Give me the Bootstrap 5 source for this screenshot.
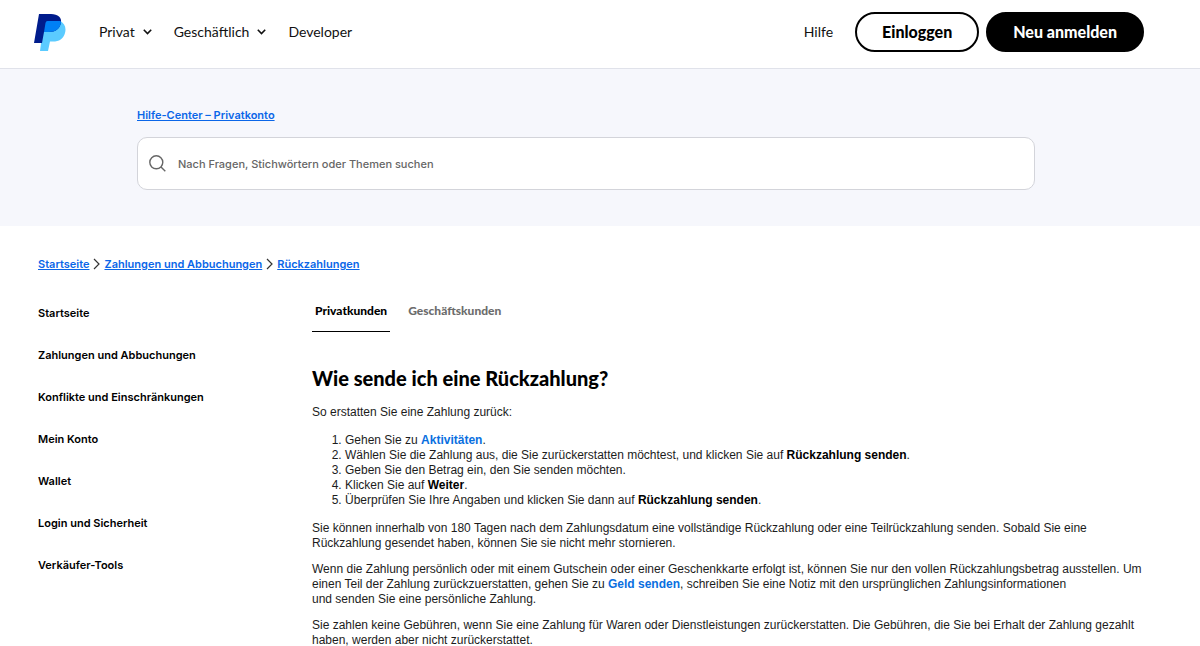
<!DOCTYPE html>
<html lang="de">
<head>
<meta charset="utf-8">
<meta name="viewport" content="width=device-width, initial-scale=1">
<title>Wie sende ich eine Rückzahlung?</title>
<link href="https://cdn.jsdelivr.net/npm/bootstrap@5.3.0/dist/css/bootstrap.min.css" rel="stylesheet">
<style>
  body { font: 12px/15px "Liberation Sans", Arial, sans-serif; color: #1c1c1c; background: #fff; }
  .site-header { height: 69px; padding: 0 56px 4px 34px; border-bottom: 1px solid #e0e2ea; font-family: Lato, sans-serif; }
  .main-menu { gap: 22px; margin-left: 33px; font-size: 14px; line-height: 20px; }
  .main-menu a, .main-menu button, .help-link { color: #111; text-decoration: none; }
  .help-link { font-size: 14px; line-height: 20px; margin-right: 22px; }
  .pill-group { gap: 7px; }
  .pill { height: 40px; border: 2px solid #000; border-radius: 20px; font-size: 16px; line-height: 20px; font-weight: 900; padding: 0 25px; }
  .pill-light { background: #fff; color: #000; }
  .pill-dark { background: #000; color: #fff; }
  .hero { background: #f6f7fc; padding: 38px 165px 36px 137px; font-family: Inter, sans-serif; }
  .ui-link { color: #0a66e8; font-size: 11px; line-height: 16px; font-weight: 600; text-decoration: underline; }
  .search-box { height: 53px; margin-top: 14px; padding: 0 11px; gap: 12px; background: #fff; border: 1px solid #d3d4da; border-radius: 10px; }
  .search-box input { font-size: 11px; line-height: 16px; font-weight: 500; color: #333; }
  .search-box input::placeholder { color: #666; opacity: 1; }
  .page { padding: 30px 56px 0 38px; }
  .trail { gap: 4px; font-family: Inter, sans-serif; }
  .columns { margin-top: 31px; }
  .side-menu { width: 274px; gap: 26px; padding-top: 2px; font: 600 11px/16px Inter, sans-serif; }
  .side-menu a { color: #000; text-decoration: none; }
  .tabs { gap: 15px; font: 12px/16px Lato, sans-serif; }
  .tabs button { padding: 0 3px 12px; border-bottom: 1px solid transparent; color: #6c6c6c; font-weight: 900; }
  .tabs button.active { border-color: #000; color: #000; }
  .article h1 { font: 900 20px/28px Lato, sans-serif; color: #000; margin: 32px 0 13px; }
  .article p { margin: 0 0 11px; }
  .article ol { margin: 13px 0; padding-left: 33px; }
  .article a { color: #0a6fdf; font-weight: 700; text-decoration: none; }
  .article strong { color: #000; }
</style>
</head>
<body>
<header class="site-header d-flex align-items-center">
  <a href="#" aria-label="PayPal" class="d-flex">
    <svg width="32" height="38" viewBox="0 0 32 38" aria-hidden="true">
      <path fill="#5bcbff" d="M10 8H26C30.500 10 32.500 14.500 31 20C29.500 26 25 28.500 19 28.500H16L14 38H6Z"/>
      <path fill="#001c8c" d="M5 1H17C24 1 28 4.500 27 10C25.500 16 21.500 19 15 19H10L8 30H0Z"/>
      <path fill="#0080f5" d="M13.500 8H26.300Q27.200 8.600 27 10C25.500 16 21.500 19 15 19H10L11.500 10Q11.800 8 13.500 8Z"/>
    </svg>
  </a>
  <nav class="main-menu d-flex">
    <button class="border-0 bg-transparent p-0 d-flex align-items-center gap-2">Privat
      <svg width="9" height="6" viewBox="0 0 9 6" fill="none" stroke="#111" stroke-width="1.6"><path d="M.8.8 4.5 4.5 8.2.8"/></svg></button>
    <button class="border-0 bg-transparent p-0 d-flex align-items-center gap-2">Geschäftlich
      <svg width="9" height="6" viewBox="0 0 9 6" fill="none" stroke="#111" stroke-width="1.6"><path d="M.8.8 4.5 4.5 8.2.8"/></svg></button>
    <a href="#">Developer</a>
  </nav>
  <a href="#" class="help-link ms-auto">Hilfe</a>
  <div class="pill-group d-flex">
    <button class="pill pill-light">Einloggen</button>
    <button class="pill pill-dark">Neu anmelden</button>
  </div>
</header>

<section class="hero">
  <a href="#" class="ui-link d-inline-block">Hilfe-Center – Privatkonto</a>
  <label class="search-box d-flex align-items-center">
    <svg width="17" height="17" viewBox="0 0 17 17" fill="none" stroke="#666" stroke-width="1.4" aria-hidden="true"><circle cx="7.3" cy="7.3" r="6.5"/><path d="m12 12 4.3 4.3"/></svg>
    <input type="search" class="border-0 p-0 flex-grow-1 bg-transparent" placeholder="Nach Fragen, Stichwörtern oder Themen suchen" aria-label="Suche">
  </label>
</section>

<main class="page">
  <nav class="trail d-flex align-items-center" aria-label="Navigationspfad">
    <a href="#" class="ui-link">Startseite</a>
    <svg width="7" height="12" viewBox="0 0 7 12" fill="none" stroke="#333" stroke-width="1.2"><path d="m1 1 5 5-5 5"/></svg>
    <a href="#" class="ui-link">Zahlungen und Abbuchungen</a>
    <svg width="7" height="12" viewBox="0 0 7 12" fill="none" stroke="#333" stroke-width="1.2"><path d="m1 1 5 5-5 5"/></svg>
    <a href="#" class="ui-link">Rückzahlungen</a>
  </nav>
  <div class="columns d-flex">
    <nav class="side-menu d-flex flex-column flex-shrink-0">
      <a href="#">Startseite</a>
      <a href="#">Zahlungen und Abbuchungen</a>
      <a href="#">Konflikte und Einschränkungen</a>
      <a href="#">Mein Konto</a>
      <a href="#">Wallet</a>
      <a href="#">Login und Sicherheit</a>
      <a href="#">Verkäufer-Tools</a>
    </nav>
    <article class="article flex-grow-1">
      <div class="tabs d-flex" role="tablist">
        <button class="active border-top-0 border-start-0 border-end-0 bg-transparent" role="tab" aria-selected="true">Privatkunden</button>
        <button class="border-top-0 border-start-0 border-end-0 bg-transparent" role="tab" aria-selected="false">Geschäftskunden</button>
      </div>
      <h1>Wie sende ich eine Rückzahlung?</h1>
      <p>So erstatten Sie eine Zahlung zurück:</p>
      <ol>
        <li>Gehen Sie zu <a href="#">Aktivitäten</a>.</li>
        <li>Wählen Sie die Zahlung aus, die Sie zurückerstatten möchtest, und klicken Sie auf <strong>Rückzahlung senden</strong>.</li>
        <li>Geben Sie den Betrag ein, den Sie senden möchten.</li>
        <li>Klicken Sie auf <strong>Weiter</strong>.</li>
        <li>Überprüfen Sie Ihre Angaben und klicken Sie dann auf <strong>Rückzahlung senden</strong>.</li>
      </ol>
      <p>Sie können innerhalb von 180 Tagen nach dem Zahlungsdatum eine vollständige Rückzahlung oder eine Teilrückzahlung senden. Sobald Sie eine<br>Rückzahlung gesendet haben, können Sie sie nicht mehr stornieren.</p>
      <p>Wenn die Zahlung persönlich oder mit einem Gutschein oder einer Geschenkkarte erfolgt ist, können Sie nur den vollen Rückzahlungsbetrag ausstellen. Um<br>einen Teil der Zahlung zurückzuerstatten, gehen Sie zu <a href="#">Geld senden</a>, schreiben Sie eine Notiz mit den ursprünglichen Zahlungsinformationen<br>und senden Sie eine persönliche Zahlung.</p>
      <p>Sie zahlen keine Gebühren, wenn Sie eine Zahlung für Waren oder Dienstleistungen zurückerstatten. Die Gebühren, die Sie bei Erhalt der Zahlung gezahlt<br>haben, werden aber nicht zurückerstattet.</p>
    </article>
  </div>
</main>
<script src="https://cdn.jsdelivr.net/npm/bootstrap@5.3.0/dist/js/bootstrap.bundle.min.js"></script>
</body>
</html>
